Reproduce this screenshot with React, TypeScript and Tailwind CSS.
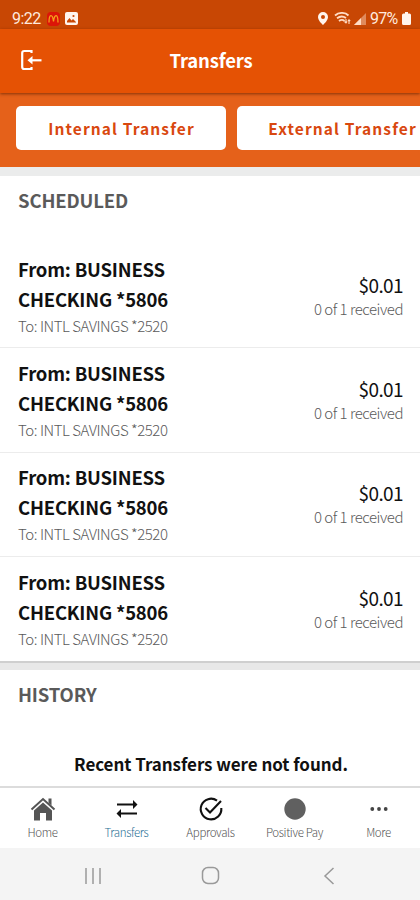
import type { ReactNode } from "react";

const App = () => {
    return (
        <div className="flex h-[900px] w-[420px] flex-col overflow-hidden bg-white font-['Noto_Sans_CJK_SC','Noto_Sans',sans-serif] text-[#111]">
            <StatusBar />
            <header className="relative z-10 flex h-16 shrink-0 items-center bg-[#e55204] px-5 text-white shadow-[0_1px_3px_rgba(90,30,0,0.7)]">
                <div className="w-16">
                    <svg className="mb-0.5 h-[22px] w-[22px]" viewBox="0 0 22 22" fill="none" stroke="currentColor" strokeWidth="2.2">
                        <path d="M11.500 4V2H4.200Q2.200 2 2.200 4v14Q2.200 20 4.200 20h7.300v-2" />
                        <path d="M11 11.300h10.500" />
                        <path d="M7.500 11.300l5-4.300v8.600z" fill="currentColor" stroke="none" />
                    </svg>
                </div>
                <h1 className="flex-1 pb-[2px] pl-0.5 text-center text-[18.500px] leading-6 font-bold tracking-[-0.2px]">Transfers</h1>
                <div className="w-16" />
            </header>
            <div className="flex h-[74px] shrink-0 gap-[11px] overflow-hidden bg-[#e5611a] pt-[13px] pl-4">
                {actions.map(label =>
                    <button key={label} className="h-11 w-[210px] shrink-0 rounded-[5px] bg-white pb-px pl-px text-[15.500px] leading-6 font-bold tracking-[1.100px] text-[#d9480f]">
                        {label}
                    </button>
                )}
            </div>
            <div className="h-[9px] shrink-0 bg-[#ebecec]" />
            <section className="h-[485px] shrink-0">
                <h2 className="h-[68px] pt-[11px] pl-[18px] text-[18.500px] leading-[26px] font-bold tracking-[-0.15px] text-[#5a5a5a]">SCHEDULED</h2>
                {transfers.map((ele, i) =>
                    <div key={i} className="flex h-[104.4px] items-center justify-between border-b border-[#ececec] pr-[17px] pl-[18px] last:border-b-0">
                        <div className="pb-[2px]">
                            <p className="w-[170px] text-[18.500px] leading-[30px] font-bold tracking-[-0.2px]">{ele.from}</p>
                            <p className="pt-px text-[15px] leading-[21px] font-light tracking-[-0.450px] text-[#5a5a5a]">{ele.to}</p>
                        </div>
                        <div className="text-right">
                            <p className="text-[19px] leading-[25px] tracking-[-0.600px]">{ele.amount}</p>
                            <p className="pt-px text-[15px] leading-[22px] font-light tracking-[-0.480px] text-[#5a5a5a]">{ele.status}</p>
                        </div>
                    </div>
                )}
            </section>
            <div className="h-[9px] shrink-0 border-t-2 border-[#cfcfcf] bg-[#e8e8e8]" />
            <section className="h-[116px] shrink-0">
                <h2 className="pt-[11px] pl-[18px] text-[18.500px] leading-[26px] font-bold tracking-[-0.15px] text-[#5a5a5a]">HISTORY</h2>
                <p className="pt-11 pl-0.5 text-center text-[17px] leading-[26px] font-bold tracking-[-0.050px]">Recent Transfers were not found.</p>
            </section>
            <nav className="grid h-[62px] shrink-0 grid-cols-5 border-t-2 border-[#dcdcdc]">
                {tabs.map(tab =>
                    <a key={tab.label} className={`flex flex-col items-center pt-2 pl-px text-[11.500px] leading-[18px] font-light tracking-[-0.350px] ${tab.active ? "text-[#1f6f95]" : "text-[#555]"}`}>
                        <svg className="mb-px h-[26px] w-[28px] shrink-0" viewBox="0 0 28 26" fill="none">{tab.icon}</svg>
                        {tab.label}
                    </a>
                )}
            </nav>
            <SystemNav />
        </div>
    )
}

export default App

const StatusBar = () => (
    <div className="flex h-[29px] shrink-0 items-center justify-between bg-[#c84704] pt-2 pr-[9px] pl-3 font-[Roboto,sans-serif] text-[16px] leading-5 text-[#ffeade]">
        <div className="flex items-center">
            <span className="w-[35px] tracking-[-0.5px]">9:22</span>
            <svg className="h-[14px] w-[13px]" viewBox="0 0 13 14">
                <rect width="13" height="14" rx="4" fill="#dc1508" />
                <path d="M2 10.500C2 1.500 5.500 1.500 6.500 9.500C7.500 1.500 11 1.500 11 10.500" fill="none" stroke="#f5a01c" strokeWidth="1.3" />
            </svg>
            <svg className="ml-[5px] h-[13px] w-[13px]" viewBox="0 0 13 13">
                <rect width="13" height="13" rx="2" fill="#fff5ee" />
                <path d="M2 10.500V9l2.500-3 2 2.500 1.500-1.500 3 3v.5z" fill="#c84704" />
                <circle cx="8.500" cy="4" r="1.100" fill="#c84704" />
            </svg>
        </div>
        <div className="flex items-center">
            <svg className="h-[13px] w-[10px]" viewBox="0 0 10 13" fill="#fff5ee">
                <path fillRule="evenodd" d="M5 0a5 5 0 0 1 5 5c0 3-3 6-5 8C3 11 0 8 0 5a5 5 0 0 1 5-5zm0 3a2 2 0 1 0 0 4 2 2 0 0 0 0-4z" />
            </svg>
            <svg className="ml-[6px] h-[13px] w-[17px]" viewBox="0 0 17 13" fill="none" stroke="#ffdcc5" strokeWidth="1.800">
                <path d="M1 3.500C5 0 11 0 14.500 3.500M3 6.300C6 4 9 4 12 6M5 9c2-1.500 4-1.500 5.500 0" />
                <path d="M12 7v4M10.500 9.500L12 11l1.200-1.500M15 12V8M13.900 9L15 7.800 16.200 9" strokeWidth="1.100" />
            </svg>
            <svg className="ml-[3px] h-[12px] w-[12px]" viewBox="0 0 12 12">
                <path d="M0 12L12 0v12z" fill="#e08a5c" />
                <path d="M0 12l7-7v7z" fill="#ffdcc5" />
            </svg>
            <span className="ml-1 w-[32px] tracking-[-0.700px]">97%</span>
            <svg className="h-[13px] w-[9px]" viewBox="0 0 9 13" fill="#fff5ee">
                <path d="M3 0h3v1.500h1.500Q9 1.500 9 3v8.500Q9 13 7.500 13h-6Q0 13 0 11.500V3Q0 1.500 1.500 1.500H3z" />
            </svg>
        </div>
    </div>
)

const SystemNav = () => (
    <div className="flex h-[52px] shrink-0 items-center bg-[#f4f4f4] pt-[3px] pl-[84px] text-[#999]">
        <svg className="h-[18px] w-[18px]" viewBox="0 0 18 18" fill="none" stroke="#b0b0b0" strokeWidth="2">
            <path d="M2 1v16M9 1v16M16 1v16" />
        </svg>
        <svg className="ml-[99px] h-[19px] w-[19px]" viewBox="0 0 19 19" fill="none" stroke="currentColor" strokeWidth="1.500">
            <rect x="1.500" y="1.500" width="16" height="16" rx="5.500" />
        </svg>
        <svg className="ml-[102px] h-[18px] w-[14px]" viewBox="0 0 14 18" fill="none" stroke="currentColor" strokeWidth="1.500">
            <path d="M11.500 1L3 9l8.500 8" />
        </svg>
    </div>
)

const actions = ["Internal Transfer", "External Transfer"]

const transfers = Array.from({ length: 4 }, () => ({
    from: "From: BUSINESS CHECKING *5806",
    to: "To: INTL SAVINGS *2520",
    amount: "$0.01",
    status: "0 of 1 received",
}))

const tabs: { label: string, active?: boolean, icon: ReactNode }[] = [
    {
        label: "Home",
        icon: <>
            <path d="M5 14.500l9-8 9 8V24.500h-6V17h-6v7.500H5z" fill="#555" />
            <path d="M2.500 13.500L14 3l11.500 10.500" stroke="#555" strokeWidth="2" />
            <path d="M19.500 2.500h3v7l-3-2.500z" fill="#555" />
        </>,
    }, {
        label: "Transfers",
        active: true,
        icon: <>
            <path d="M4 8.500h18M24 17.500H7" stroke="#111" strokeWidth="2.200" />
            <path d="M20 4l4.500 4.500L20 13zM8 13l-4.500 4.500L8 22z" fill="#111" />
        </>,
    }, {
        label: "Approvals",
        icon: <>
            <path d="M20 4.600A10.300 10.300 0 1 0 24.300 12" stroke="#111" strokeWidth="2.100" />
            <path d="M8.500 12l4.500 4.500L24 5" stroke="#111" strokeWidth="2.100" />
        </>,
    }, {
        label: "Positive Pay",
        icon: <circle cx="14" cy="13" r="10.700" fill="#606060" />,
    }, {
        label: "More",
        icon: <>
            <circle cx="7.300" cy="13" r="1.900" fill="#444" />
            <circle cx="14" cy="13" r="1.900" fill="#444" />
            <circle cx="20.700" cy="13" r="1.900" fill="#444" />
        </>,
    }
]
